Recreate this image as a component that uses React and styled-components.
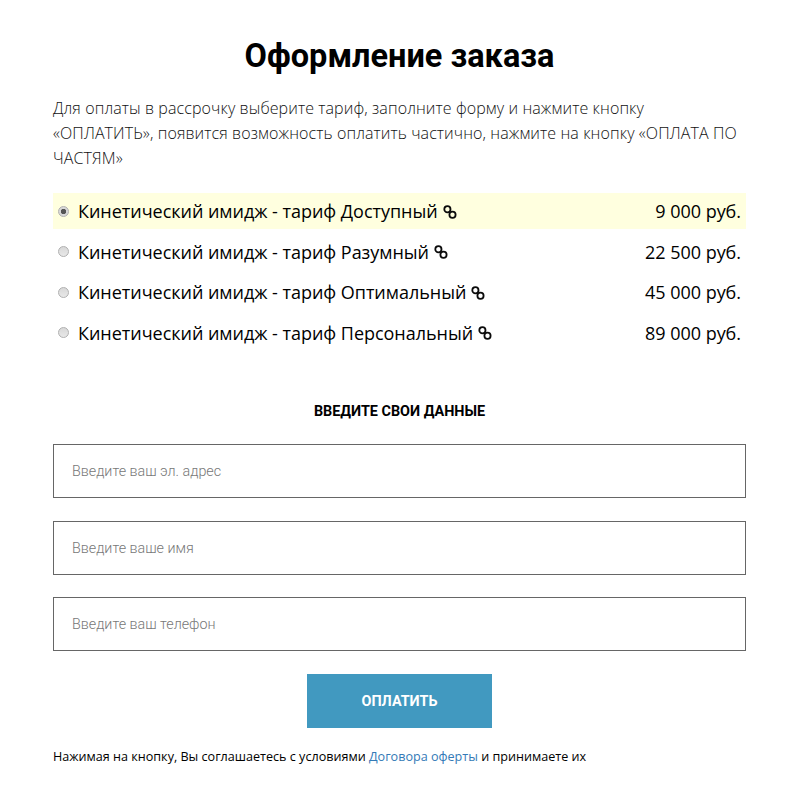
import React from 'react'
import styled, { createGlobalStyle } from 'styled-components'

const GlobalStyle = createGlobalStyle`
  html, body {
    margin: 0;
    padding: 0;
    background: #fff;
  }
`

const tariffs = [
  { name: 'Доступный', price: '9 000 руб.', selected: true },
  { name: 'Разумный', price: '22 500 руб.' },
  { name: 'Оптимальный', price: '45 000 руб.' },
  { name: 'Персональный', price: '89 000 руб.' }
]

const App = () => (
  <Page>
    <GlobalStyle />
    <Title>Оформление заказа</Title>
    <Intro>
      Для оплаты в рассрочку выберите тариф, заполните форму и нажмите кнопку
      «ОПЛАТИТЬ», появится возможность оплатить частично, нажмите на кнопку
      «ОПЛАТА ПО ЧАСТЯМ»
    </Intro>
    <Tariffs>
      {tariffs.map(t => (
        <Tariff key={t.name} $selected={t.selected}>
          <Radio $checked={t.selected} />
          <TariffName>
            Кинетический имидж - тариф {t.name}
            <ChainIcon />
          </TariffName>
          <Price>{t.price}</Price>
        </Tariff>
      ))}
    </Tariffs>
    <FormTitle>Введите свои данные</FormTitle>
    <Form>
      <Field placeholder="Введите ваш эл. адрес" />
      <Field placeholder="Введите ваше имя" />
      <Field placeholder="Введите ваш телефон" />
      <PayButton type="button">Оплатить</PayButton>
    </Form>
    <Terms>
      Нажимая на кнопку, Вы соглашаетесь с условиями{' '}
      <TermsLink href="#">Договора оферты</TermsLink> и принимаете их
    </Terms>
  </Page>
)

const ChainIcon = () => (
  <ChainSvg viewBox="0 0 14 14" width="14" height="14">
    <g fill="none" stroke="#0b0b0b" strokeWidth="1.8">
      <circle cx="4.4" cy="4.2" r="3.1" />
      <circle cx="9.5" cy="9.7" r="3.1" />
    </g>
  </ChainSvg>
)

const Page = styled('div')`
  box-sizing: border-box;
  width: 746px;
  padding-left: 53px;
  color: #000;
`

const Title = styled('h1')`
  margin: 0;
  padding-top: 34px;
  height: 40px;
  font: 700 32.5px/44px Roboto, sans-serif;
  text-align: center;
`

const Intro = styled('p')`
  margin: 22px 0 0;
  font: 300 16px/25px 'Open Sans', sans-serif;
  letter-spacing: 0.1px;
  color: #111;
`

const Tariffs = styled('div')`
  margin-top: 22px;
  display: flex;
  flex-direction: column;
  gap: 4.5px;
`

const Tariff = styled('label')`
  display: flex;
  align-items: center;
  height: 36px;
  padding: 0 5px;
  background: ${p => (p.$selected ? '#ffffdf' : 'transparent')};
  font: 400 18px 'Open Sans', sans-serif;
  letter-spacing: -0.03px;
`

const Radio = styled('span')`
  width: 11px;
  height: 11px;
  box-sizing: border-box;
  margin: 0 9.5px 0 -0.5px;
  border-radius: 50%;
  border: 1px solid #b0b0b0;
  background: ${p =>
    p.$checked
      ? 'radial-gradient(circle, #555 0 2.4px, #d8d8d8 3px)'
      : 'linear-gradient(#d8d8d8, #e8e8e8)'};
`

const TariffName = styled('span')`
  flex: 1;
  display: flex;
  align-items: center;
  white-space: pre;
`

const ChainSvg = styled('svg')`
  margin: 1px 0 0 5px;
`

const Price = styled('span')`
  white-space: nowrap;
`

const FormTitle = styled('h2')`
  margin: 51px 0 0;
  font: 700 14.4px/20px Roboto, sans-serif;
  text-align: center;
  text-transform: uppercase;
`

const Form = styled('form')`
  margin-top: 22.5px;
  display: flex;
  flex-direction: column;
  gap: 22.67px;
`

const Field = styled('input')`
  display: block;
  height: 54px;
  box-sizing: border-box;
  padding: 0 18px;
  border: 1px solid #666;
  outline: none;
  font: 300 14.3px Roboto, sans-serif;
  &::placeholder {
    color: #777;
    opacity: 1;
  }
`

const PayButton = styled('button')`
  align-self: center;
  width: 185px;
  height: 54px;
  padding: 2px 0 0;
  border: 0;
  background: #4199c0;
  color: #fff;
  font: 700 14.4px Roboto, sans-serif;
  text-transform: uppercase;
`

const Terms = styled('p')`
  margin: 20px 0 0;
  font: 400 12.6px/18px 'Open Sans', sans-serif;
`

const TermsLink = styled('a')`
  color: #337ab7;
  text-decoration: none;
`

export default App
